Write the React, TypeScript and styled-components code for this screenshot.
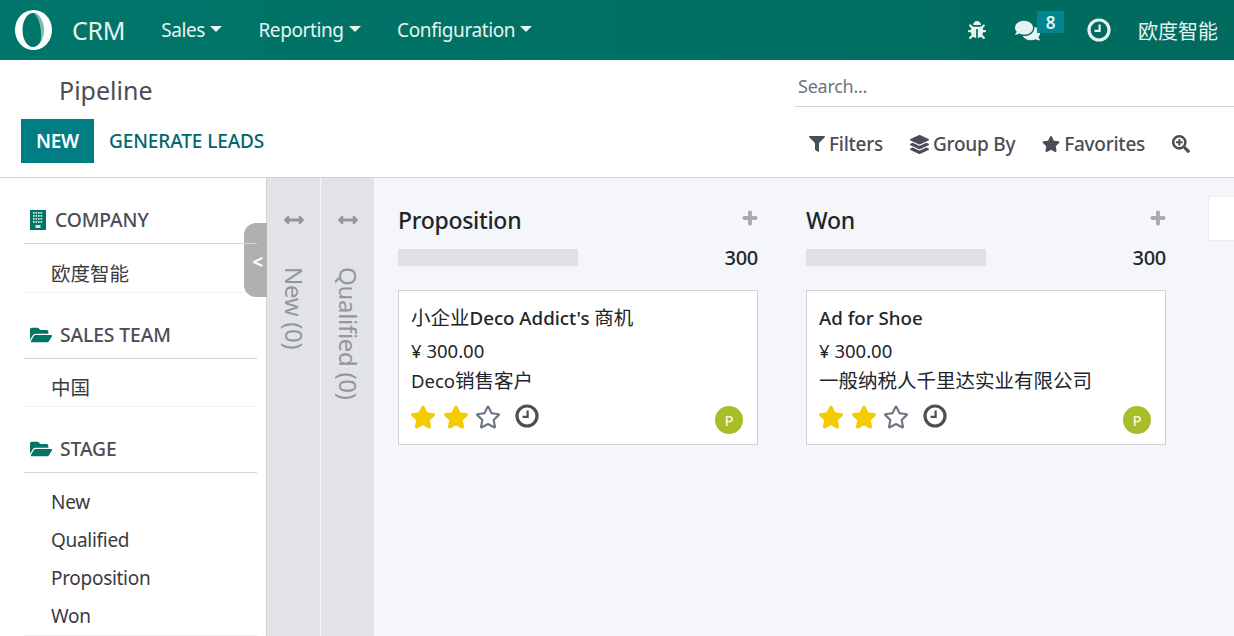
import * as React from 'react';
import styled, { createGlobalStyle } from 'styled-components';
import {
  FaArrowsAltH,
  FaBug,
  FaComments,
  FaFilter,
  FaFolderOpen,
  FaLayerGroup,
  FaPlus,
  FaSearchPlus,
  FaStar,
  FaRegStar,
} from 'react-icons/fa';

const FONT = '"Noto Sans", "Open Sans", "Noto Sans CJK SC", sans-serif';

const GlobalStyle = createGlobalStyle`
  html, body {
    margin: 0;
    padding: 0;
    height: 100%;
    overflow: hidden;
  }
  body {
    font-family: ${FONT};
    background: #fff;
  }
`;

const Page = styled.div`
  width: 1234px;
  height: 636px;
  display: flex;
  flex-direction: column;
  overflow: hidden;
`;

const NavBar = styled.header`
  height: 60px;
  flex: none;
  display: flex;
  align-items: center;
  padding: 0 16px 0 15px;
  color: #e6f3f1;
  background: linear-gradient(90deg, #00766a, #006a5e);
`;

const Brand = styled.div`
  display: flex;
  align-items: center;
  gap: 20px;
  margin-right: 36px;
  font-size: 25px;
  letter-spacing: -0.3px;
`;

const NavItem = styled.div`
  display: flex;
  align-items: center;
  gap: 5px;
  margin-right: 36.5px;
  font-size: 19px;
  letter-spacing: -0.4px;

  &::after {
    content: '';
    margin-top: -2px;
    border-top: 6px solid #e6f3f1;
    border-left: 6px solid transparent;
    border-right: 6px solid transparent;
  }
`;

const NavRight = styled.div`
  margin-left: auto;
  display: flex;
  align-items: center;
`;

const NavIcon = styled.span<{ $ml?: number; $mr?: number }>`
  position: relative;
  display: flex;
  color: #e6f3f1;
  margin-left: ${(p) => p.$ml ?? 0}px;
  margin-right: ${(p) => p.$mr ?? 0}px;
`;

const Badge = styled.span`
  position: absolute;
  left: 22px;
  top: -7px;
  width: 27px;
  height: 22px;
  padding-top: 2px;
  box-sizing: border-box;
  background: #01858f;
  color: #e6f3f1;
  font-size: 17px;
  font-weight: 600;
  display: flex;
  align-items: center;
  justify-content: center;
`;

const NavUser = styled.span`
  font-size: 20px;
  margin-left: 27px;
`;

const ControlPanel = styled.section`
  height: 118px;
  flex: none;
  box-sizing: border-box;
  border-bottom: 1px solid #ced4da;
  display: flex;
  justify-content: space-between;
`;

const PanelLeft = styled.div`
  padding-left: 21px;
`;

const Title = styled.h1`
  margin: 11px 0 10px 38px;
  height: 38px;
  line-height: 38px;
  font-size: 25px;
  font-weight: 400;
  color: #4c4c56;
`;

const Buttons = styled.div`
  display: flex;
  align-items: center;
`;

const PrimaryButton = styled.button`
  width: 73px;
  height: 44px;
  padding: 0;
  border: 0;
  background: #017e84;
  color: #fff;
  font: 600 19px ${FONT};
  letter-spacing: -0.3px;
`;

const LinkButton = styled.button`
  margin-left: 15px;
  padding: 0;
  border: 0;
  background: none;
  color: #01666b;
  font: 500 19px ${FONT};
  letter-spacing: -0.1px;
`;

const PanelRight = styled.div`
  width: 439px;
`;

const SearchBox = styled.div`
  height: 47px;
  box-sizing: border-box;
  border-bottom: 1px solid #ced4da;
  padding: 14px 0 0 3px;
  font-size: 18px;
  letter-spacing: -0.25px;
  color: #6c757d;
`;

const Filters = styled.div`
  display: flex;
  align-items: center;
  padding: 24px 0 0 14px;
`;

const FilterItem = styled.span`
  display: flex;
  align-items: center;
  gap: 4px;
  margin-right: 27px;
  font-size: 19px;
  font-weight: 500;
  letter-spacing: -0.25px;
  color: #4c4c56;
`;

const Body = styled.main`
  flex: 1;
  display: flex;
  min-height: 0;
`;

const SideBar = styled.aside`
  position: relative;
  width: 267px;
  flex: none;
  box-sizing: border-box;
  border-right: 1px solid #ced4da;
  padding: 22px 9px 0 24px;
`;

const Handle = styled.div`
  position: absolute;
  top: 45px;
  right: -1px;
  width: 23px;
  height: 74px;
  border-radius: 12px 0 0 12px;
  background: #b0b0b0;
  color: #fff;
  font-size: 19px;
  font-weight: 700;
  line-height: 78px;
  text-align: right;
  padding-right: 4px;
  box-sizing: border-box;
`;

const GroupHeader = styled.div<{ $gap: number }>`
  position: relative;
  height: 44px;
  box-sizing: border-box;
  border-bottom: 1px solid #ced4da;
  padding: 0 0 4px 6px;
  display: flex;
  align-items: center;
  gap: ${(p) => p.$gap}px;
  font-size: 19.3px;
  font-weight: 500;
  letter-spacing: -0.1px;
  color: #4c4c56;

  svg {
    color: #017566;
    flex: none;
  }
`;

const Group = styled.div`
  margin-bottom: 22px;
`;

const FilterRow = styled.div<{ $h: number }>`
  height: ${(p) => p.$h}px;
  box-sizing: border-box;
  padding-left: 27px;
  display: flex;
  align-items: center;
  font-size: 19px;
  letter-spacing: -0.3px;
  color: #3a3a42;

  > span {
    margin-top: -2px;
  }
`;

const RowList = styled.div`
  padding-top: 10px;
  border-bottom: 1px solid #f2f3f5;
`;

const Board = styled.div`
  flex: 1;
  display: flex;
  background: #f5f6fa;
  min-width: 0;
  overflow: hidden;
`;

const Fold = styled.div`
  width: 53px;
  flex: none;
  background: #e2e3e7;
  border-right: 1px solid #f5f6fa;
  display: flex;
  flex-direction: column;
  align-items: center;
  padding-top: 32px;
  color: #94969b;
`;

const FoldLabel = styled.span`
  margin: 37px 0 0 1px;
  writing-mode: vertical-rl;
  font-size: 24px;
  letter-spacing: -0.3px;
`;

const Column = styled.section<{ $first?: boolean }>`
  width: 360px;
  flex: none;
  margin-left: ${(p) => (p.$first ? 23 : 48)}px;
`;

const ColumnHead = styled.div`
  height: 71px;
  display: flex;
  align-items: flex-start;
  justify-content: space-between;
  padding-top: 27px;
  box-sizing: border-box;
  font-size: 23px;
  font-weight: 500;
  letter-spacing: -0.3px;
  line-height: 31px;
  color: #212529;

  svg {
    margin-top: 5px;
    color: #a9abb0;
    stroke: currentColor;
    stroke-width: 30;
  }
`;

const ProgressRow = styled.div`
  display: flex;
  align-items: center;
  justify-content: space-between;
  height: 17px;
  margin-bottom: 24px;
  font-size: 20px;
  font-weight: 500;
  letter-spacing: -0.3px;
  color: #212529;
`;

const ProgressBar = styled.div`
  width: 180px;
  height: 17px;
  background: #dfe0e4;
`;

const Card = styled.article`
  position: relative;
  box-sizing: border-box;
  height: 155px;
  background: #fff;
  border: 1px solid #ced0d8;
  padding: 12px 12px 0;
`;

const CardTitle = styled.div`
  height: 30px;
  line-height: 30px;
  font-size: 18.7px;
  font-weight: 500;
  color: #212529;
`;

const CardLine = styled.div<{ $mt: number }>`
  height: 30px;
  margin-top: ${(p) => p.$mt}px;
  line-height: 30px;
  font-size: 18.5px;
  color: #212529;
`;

const Cjk = styled.span`
  font-size: 19.5px;
  font-weight: 400;
  letter-spacing: 0;
`;

const CardFoot = styled.div`
  margin-top: 8px;
  display: flex;
  align-items: center;
  gap: 6.5px;
  margin-left: -1px;
`;

const ClockSlot = styled.span`
  display: flex;
  margin: -3px 0 0 7px;
`;

const Avatar = styled.span`
  position: absolute;
  right: 14px;
  bottom: 10px;
  width: 28px;
  height: 28px;
  border-radius: 50%;
  background: #a9bd2b;
  color: #f6f8e0;
  font-size: 15px;
  font-weight: 500;
  display: flex;
  align-items: center;
  justify-content: center;
`;

const AddColumn = styled.div`
  width: 60px;
  flex: none;
  box-sizing: border-box;
  height: 45px;
  margin: 18px 0 0 42px;
  background: #fff;
  border: 1px solid #eceef2;
`;

const Clock = ({ size, color }: { size: number; color: string }) => (
  <svg width={size} height={size} viewBox="0 0 24 24" fill="none" stroke={color}>
    <circle cx="12" cy="12" r="10" strokeWidth="3.2" />
    <path d="M12.6 6.5v6.3H7.5" strokeWidth="2.2" />
  </svg>
);

const Logo = () => (
  <svg width="37" height="40" viewBox="0 0 37 40">
    <ellipse cx="18.5" cy="20" rx="18.5" ry="20" fill="#fff" />
    <ellipse cx="18" cy="20" rx="10.5" ry="17" fill="#00766a" />
    <path d="M19 3c5.5 2 10 8.5 10 17 0 6-2 10-3.500 12.500 .6-4 .8-8 .3-12.500C25 12 22.500 6.500 19 3z" fill="#7fbcb2" />
  </svg>
);

const BuildingIcon = () => (
  <svg width="16" height="20" viewBox="0 0 16 20">
    <rect width="16" height="20" fill="currentColor" />
    {[3, 5.5, 8, 10.5].map((x) =>
      [2, 5, 8, 11].map((y) => <rect key={`${x}-${y}`} x={x} y={y} width="1.6" height="1.8" fill="#cfe6e2" />),
    )}
    <rect x="5.5" y="15" width="5" height="3" fill="#cfe6e2" />
  </svg>
);

// the Chinese runs come out bigger and lighter than the latin ones
const Mixed = ({ text }: { text: string }) => (
  <>
    {text.split(/([\u4e00-\u9fff]+)/).map((part, i) =>
      i % 2 ? <Cjk key={i}>{part}</Cjk> : part,
    )}
  </>
);

const columns = [
  { name: 'Proposition', title: "小企业Deco Addict's 商机", customer: 'Deco销售客户' },
  { name: 'Won', title: 'Ad for Shoe', customer: '一般纳税人千里达实业有限公司' },
];

export default function App() {
  return (
    <Page>
      <GlobalStyle />
      <NavBar>
        <Brand>
          <Logo />
          CRM
        </Brand>
        <NavItem>Sales</NavItem>
        <NavItem>Reporting</NavItem>
        <NavItem>Configuration</NavItem>
        <NavRight>
          <NavIcon>
            <FaBug size={18} />
          </NavIcon>
          <NavIcon $ml={29} $mr={47}>
            <FaComments size={25} />
            <Badge>8</Badge>
          </NavIcon>
          <NavIcon>
            <Clock size={24} color="#e6f3f1" />
          </NavIcon>
          <NavUser>欧度智能</NavUser>
        </NavRight>
      </NavBar>
      <ControlPanel>
        <PanelLeft>
          <Title>Pipeline</Title>
          <Buttons>
            <PrimaryButton>NEW</PrimaryButton>
            <LinkButton>GENERATE LEADS</LinkButton>
          </Buttons>
        </PanelLeft>
        <PanelRight>
          <SearchBox>Search...</SearchBox>
          <Filters>
            <FilterItem><FaFilter size={16} />Filters</FilterItem>
            <FilterItem><FaLayerGroup size={19} />Group By</FilterItem>
            <FilterItem><FaStar size={18} />Favorites</FilterItem>
            <FilterItem><FaSearchPlus size={18} /></FilterItem>
          </Filters>
        </PanelRight>
      </ControlPanel>
      <Body>
        <SideBar>
          <Handle>&lt;</Handle>
          <Group>
            <GroupHeader $gap={9}><BuildingIcon />COMPANY</GroupHeader>
            <RowList><FilterRow $h={38}><Mixed text="欧度智能" /></FilterRow></RowList>
          </Group>
          <Group>
            <GroupHeader $gap={8}><FaFolderOpen size={22} />SALES TEAM</GroupHeader>
            <RowList><FilterRow $h={37}><Mixed text="中国" /></FilterRow></RowList>
          </Group>
          <Group>
            <GroupHeader $gap={8}><FaFolderOpen size={22} />STAGE</GroupHeader>
            <RowList>
              <FilterRow $h={38}>New</FilterRow>
              <FilterRow $h={38}>Qualified</FilterRow>
              <FilterRow $h={38}>Proposition</FilterRow>
              <FilterRow $h={38}>Won</FilterRow>
            </RowList>
          </Group>
        </SideBar>
        <Board>
          <Fold>
            <FaArrowsAltH size={20} />
            <FoldLabel>New (0)</FoldLabel>
          </Fold>
          <Fold>
            <FaArrowsAltH size={20} />
            <FoldLabel>Qualified (0)</FoldLabel>
          </Fold>
          {columns.map((c, i) => (
            <Column key={c.name} $first={i === 0}>
              <ColumnHead>
                {c.name}
                <FaPlus size={16} />
              </ColumnHead>
              <ProgressRow>
                <ProgressBar />
                300
              </ProgressRow>
              <Card>
                <CardTitle><Mixed text={c.title} /></CardTitle>
                <CardLine $mt={3}>¥ 300.00</CardLine>
                <CardLine $mt={0}><Mixed text={c.customer} /></CardLine>
                <CardFoot>
                  <FaStar size={26} color="#f3cc00" />
                  <FaStar size={26} color="#f3cc00" />
                  <FaRegStar size={26} color="#6f7787" />
                  <ClockSlot><Clock size={24} color="#4f4f4f" /></ClockSlot>
                </CardFoot>
                <Avatar>P</Avatar>
              </Card>
            </Column>
          ))}
          <AddColumn />
        </Board>
      </Body>
    </Page>
  );
}
